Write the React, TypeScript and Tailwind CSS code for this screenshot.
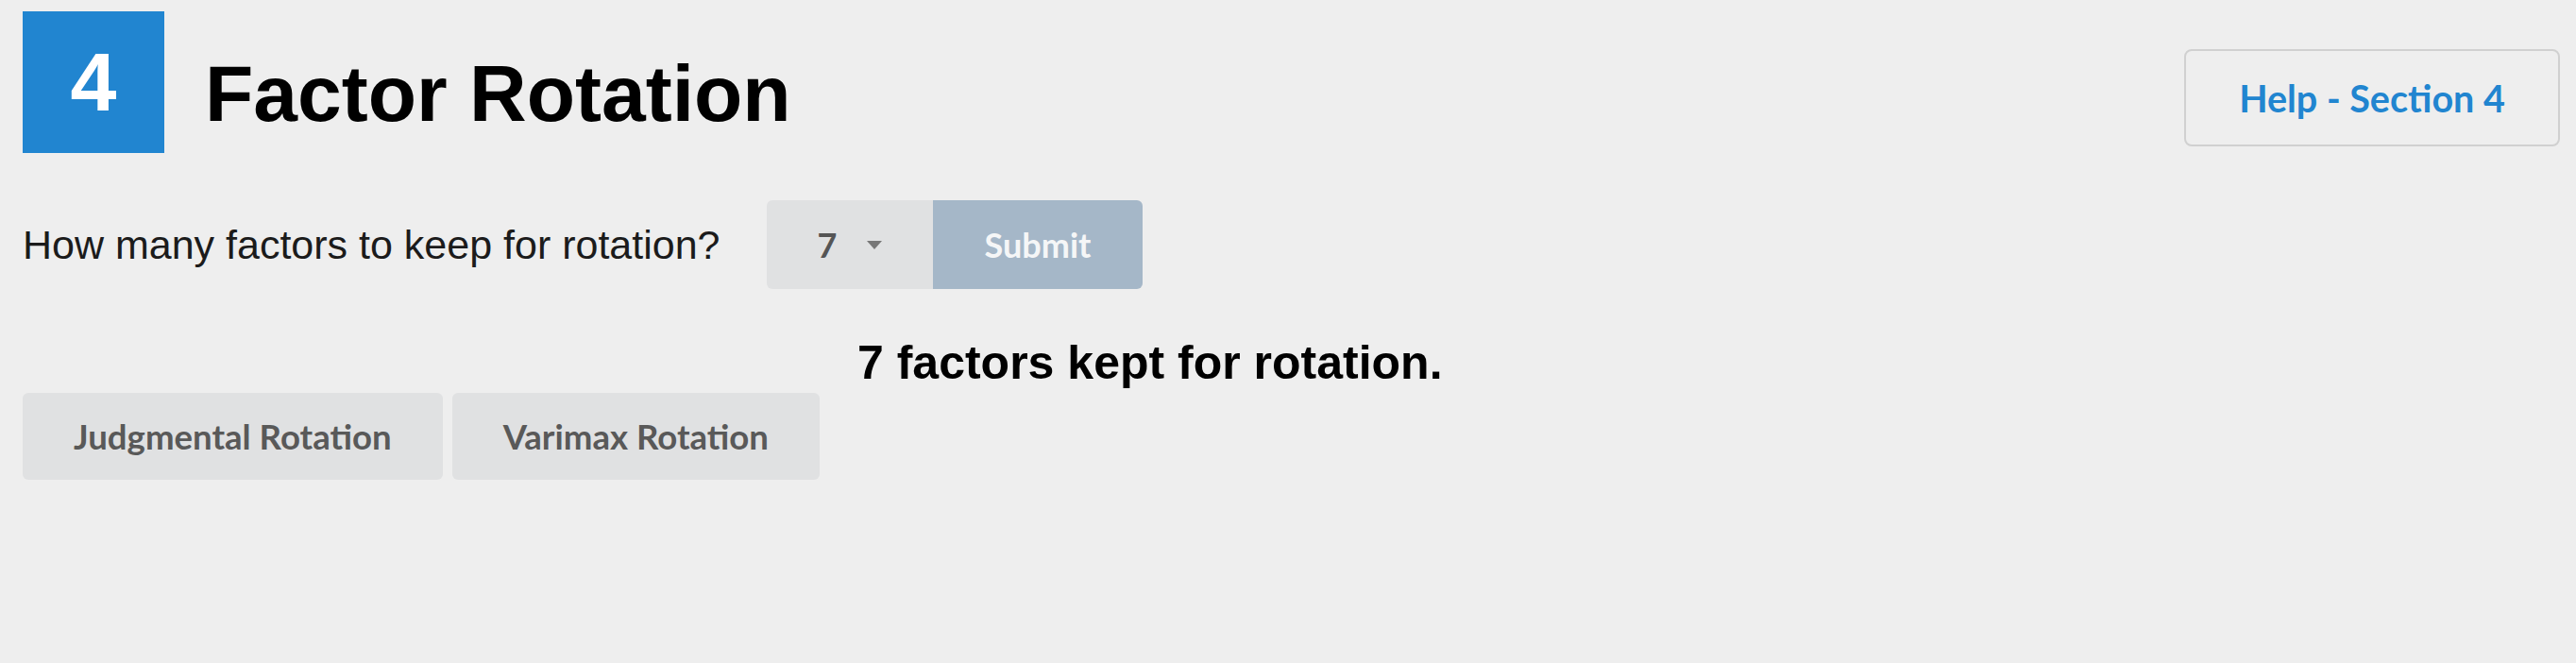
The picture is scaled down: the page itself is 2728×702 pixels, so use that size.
import { useState } from 'react';

const lato = "font-['Lato',sans-serif]";
const helv = "font-['Liberation_Sans',Arial,sans-serif]";

function Caret() {
  return (
    <svg width="16" height="9" viewBox="0 0 16 9" className="block">
      <path d="M0 0 L16 0 L8 9 Z" fill="#777777" />
    </svg>
  );
}

export default function App() {
  const [factors] = useState(7);

  return (
    <div className="min-h-[702px] w-full bg-[#eeeeee] pl-6 pr-[17px] pt-3">
      <header className="flex items-start justify-between">
        <div className="flex items-start">
          <div
            className={`flex h-[150px] w-[150px] items-center justify-center bg-[#2185d0] text-[88px] font-bold leading-none text-white ${helv}`}
          >
            4
          </div>
          <h1 className={`ml-[43px] mt-[45px] text-[84px] font-bold leading-none text-black ${helv}`}>
            Factor Rotation
          </h1>
        </div>
        <button
          className={`mt-10 flex h-[103px] w-[398px] items-center justify-center rounded-lg border-2 border-[#d0d0d0] text-[39.5px] font-bold text-[#2185d0] ${lato}`}
        >
          Help - Section 4
        </button>
      </header>

      <div className="mt-[50px] flex items-center">
        <span className={`w-[788px] text-[43px] leading-none text-[#1b1b1b] ${helv}`}>
          How many factors to keep for rotation?
        </span>
        <div className="flex">
          <div
            className={`flex h-[94px] w-[176px] items-center justify-center gap-8 rounded-l-md bg-[#e0e1e2] text-[36px] font-bold text-[#555555] ${lato}`}
          >
            <span>{factors}</span>
            <Caret />
          </div>
          <button
            className={`h-[94px] w-[222px] rounded-r-md bg-[#a5b7c8] text-[36px] font-bold text-[#f5f6f7] ${lato}`}
          >
            Submit
          </button>
        </div>
      </div>

      <p className={`ml-[884px] mt-[53px] text-[50px] font-bold leading-none text-black ${helv}`}>
        {factors} factors kept for rotation.
      </p>

      <div className="mt-[7px] flex gap-[10px]">
        {['Judgmental Rotation', 'Varimax Rotation'].map((label) => (
          <button
            key={label}
            className={`h-[92px] rounded-md bg-[#e0e1e2] px-[54px] text-[36.6px] font-bold text-[#595959] ${lato}`}
          >
            {label}
          </button>
        ))}
      </div>
    </div>
  );
}
